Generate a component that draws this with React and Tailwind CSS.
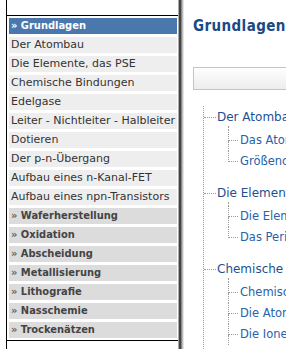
const subItems = [
  "Der Atombau",
  "Die Elemente, das PSE",
  "Chemische Bindungen",
  "Edelgase",
  "Leiter - Nichtleiter - Halbleiter",
  "Dotieren",
  "Der p-n-Übergang",
  "Aufbau eines n-Kanal-FET",
  "Aufbau eines npn-Transistors",
];

const sections = [
  "Waferherstellung",
  "Oxidation",
  "Abscheidung",
  "Metallisierung",
  "Lithografie",
  "Nasschemie",
  "Trockenätzen",
];

const tree = [
  { title: "Der Atombau", children: ["Das Atommodell", "Größenordnungen"], open: false },
  { title: "Die Elemente, das PSE", children: ["Die Elemente", "Das Periodensystem"], open: false },
  { title: "Chemische Bindungen", children: ["Chemische Bindungen", "Die Atombindung", "Die Ionenbindung"], open: true },
];

function TreeGroup({ group }) {
  return (
    <div className="flex flex-col">
      <div className="flex h-[18px] items-center whitespace-nowrap">
        <span className="w-[12px] shrink-0 border-t border-dotted border-[#9a9a9a]" />
        <span className="pl-[1px] font-['DejaVu_Sans',Verdana,sans-serif] text-[12px] leading-[18px] text-[#1d4f91]">
          {group.title}
        </span>
      </div>
      <div className="ml-[24px] flex flex-col pb-[12px]">
        <div className="h-[4px] border-l border-dotted border-[#9a9a9a]" />
        {group.children.map((c, i) => {
          const last = i === group.children.length - 1 && !group.open;
          return (
            <div key={c} className="flex h-[21px] whitespace-nowrap">
              <div className="flex w-[10px] shrink-0 flex-col">
                <div className="h-[11px] border-b border-l border-dotted border-[#9a9a9a]" />
                <div className={last ? "flex-1" : "flex-1 border-l border-dotted border-[#9a9a9a]"} />
              </div>
              <span className="self-center pl-[2px] font-['DejaVu_Sans',Verdana,sans-serif] text-[11.5px] leading-[21px] text-[#2862aa]">
                {c}
              </span>
            </div>
          );
        })}
      </div>
    </div>
  );
}

export default function App() {
  return (
    <div className="flex h-[349px] w-full overflow-hidden bg-white">
      <div className="ml-[6px] flex w-[172px] shrink-0 flex-col border-l border-black">
        <div className="h-[15px] shrink-0" />
        <div className="flex flex-col gap-[3px] border-y border-black pb-[2px] pl-[2px] pr-[1px] pt-[2px]">
          <div className="flex h-[16px] items-center overflow-hidden whitespace-nowrap bg-[#4a78ad] pl-[2px] font-['DejaVu_Sans_Condensed','DejaVu_Sans',sans-serif] text-[11px] font-bold text-white">
            » Grundlagen
          </div>
          {subItems.map((s) => (
            <div
              key={s}
              className="flex h-[16px] items-center overflow-hidden whitespace-nowrap bg-[#eeeeee] pl-[2px] font-['DejaVu_Sans',Verdana,sans-serif] text-[11px] text-[#333333]"
            >
              {s}
            </div>
          ))}
          {sections.map((s) => (
            <div
              key={s}
              className="flex h-[16px] items-center overflow-hidden whitespace-nowrap bg-[#dcdcdc] pl-[2px] font-['DejaVu_Sans_Condensed','DejaVu_Sans',sans-serif] text-[11px] font-bold text-[#444444]"
            >
              <span className="text-[#666]">»</span>&nbsp;{s}
            </div>
          ))}
        </div>
      </div>
      <div className="w-[6px] shrink-0 bg-[linear-gradient(to_right,#aaaaaa_0,#aaaaaa_1px,#444444_1px,#444444_3px,#888888_3px,#888888_4px,#bbbbbb_4px,#bbbbbb_5px,#e5e5e5_5px)]" />
      <div className="flex min-w-0 flex-1 flex-col pl-[9px]">
        <div className="pt-[16px] whitespace-nowrap font-['DejaVu_Sans_Condensed','DejaVu_Sans',sans-serif] text-[15px] font-bold leading-[20px] tracking-[0.4px] text-[#1a4a86]">
          Grundlagen
        </div>
        <div className="mt-[31px] h-[23px] w-[200px] shrink-0 border border-[#c4c4c4] bg-[linear-gradient(to_bottom,#ffffff,#ececec)]" />
        <div className="ml-[10px] mt-[16px] flex flex-1 flex-col border-l border-dotted border-[#9a9a9a] pt-[2px]">
          {tree.map((g) => (
            <TreeGroup key={g.title} group={g} />
          ))}
        </div>
      </div>
    </div>
  );
}
